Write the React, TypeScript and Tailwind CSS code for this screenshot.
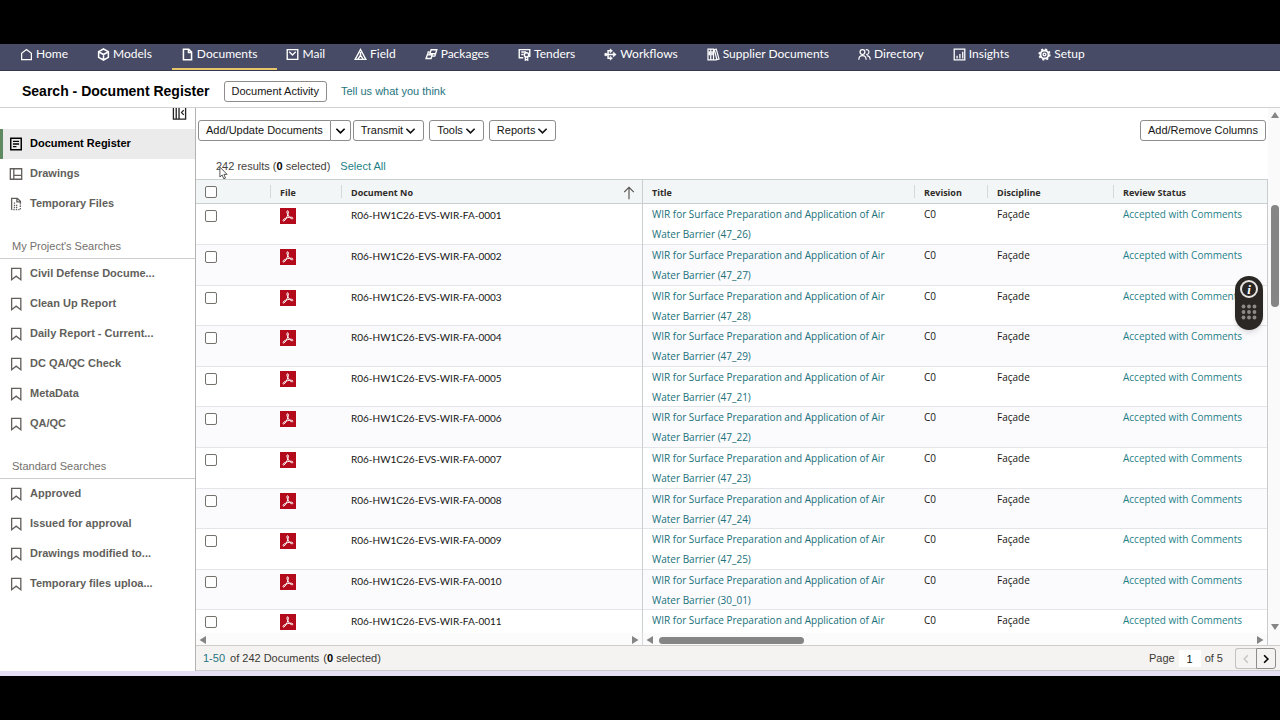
import type { ReactNode } from "react";

type IconProps = { children: ReactNode; className?: string; width?: number };

function Icon({ children, className = "size-[14px]", width = 1.5 }: IconProps) {
  return (
    <svg
      viewBox="0 0 16 16"
      fill="none"
      stroke="currentColor"
      strokeWidth={width}
      aria-hidden="true"
      className={`shrink-0 ${className}`}
    >
      {children}
    </svg>
  );
}

const navItems: { label: string; icon: ReactNode }[] = [
  { label: "Home", icon: <path d="M2 14.2V6.6L8 1.8l6 4.8v7.6z" /> },
  {
    label: "Models",
    icon: <path d="M8 1.2l6 3.3v7L8 14.8l-6-3.3v-7zM3 5.200L8 8l5-2.800M8 8v6" strokeWidth="1.900" />,
  },
  {
    label: "Documents",
    icon: <path d="M3 1.5h6.5L13 5v9.5H3zM9.2 1.5v4H13" strokeWidth="1.9" />,
  },
  { label: "Mail", icon: <path d="M1.5 2h13v12h-13zM4 4.500l4 4 4-4" strokeWidth="1.700" /> },
  { label: "Field", icon: <path d="M8 1.800L14.600 14H1.400zM8 5v4M5 13.500L8 9l3 4.500" strokeWidth="1.700" /> },
  {
    label: "Packages",
    icon: <path d="M7.500 2.200h7L13 7H6zM5.500 5H4l-.8 3.500M8.500 10h3.500l.7-2M2.800 8.500h6L7.500 13H1.300z" strokeWidth="1.700" />,
  },
  {
    label: "Tenders",
    icon: (
      <>
        <path d="M6.5 12H1.5V2h13v9M4 5h6M4 8h3" strokeWidth="1.700" />
        <circle cx="10.5" cy="8.500" r="2.6" strokeWidth="1.700" />
        <path d="M9 11v4l1.5-1 1.5 1v-4" />
      </>
    ),
  },
  {
    label: "Workflows",
    icon: (
      <>
        <path d="M1 8h12M8 3.5H5v9h3" strokeWidth="1.800" />
        <path d="M11.500 5l3.500 3-3.500 3zM7.500 1l3 2.500-3 2.500zM7.500 10l3 2.500-3 2.500zM1 6.500h2.500v3H1z" fill="currentColor" strokeWidth="0.6" />
      </>
    ),
  },
  {
    label: "Supplier Documents",
    icon: <path d="M1.2 1.500h3.400v13H1.200zM4.600 1.500H8v13H4.600zM9 2l2.400-.6 3.400 12.300-2.600.6zM8 14.500h4M2.900 4v5M6.300 4v5" strokeWidth="1.500" />,
  },
  {
    label: "Directory",
    icon: (
      <>
        <circle cx="5.5" cy="5" r="3" />
        <path d="M1 14.5c0-3 1.8-5 4.5-5s4.5 2 4.5 5M9.5 2.2A3 3 0 1 1 10 8M11 9.5c2.4.4 4 2.200 4 5" />
      </>
    ),
  },
  {
    label: "Insights",
    icon: <path d="M1.500 1.500h13v13h-13zM5 13V9.500M8.500 13V7.500M12 13V4.500" strokeWidth="1.600" />,
  },
  {
    label: "Setup",
    icon: (
      <>
        <circle cx="8" cy="8" r="5" strokeWidth="2.400" />
        <circle cx="8" cy="8" r="6.600" strokeWidth="1.800" strokeDasharray="2.600 2.580" />
        <circle cx="8" cy="8" r="1.800" strokeWidth="1.600" />
      </>
    ),
  },
];

const mainLinks: { label: string; icon: ReactNode }[] = [
  { label: "Document Register", icon: <path d="M2 1.500h12v13H2zM4.500 5h7M4.500 8h7M4.500 11h4" strokeWidth="1.700" /> },
  { label: "Drawings", icon: <path d="M1.500 2h13v12h-13zM5.500 2v12M5.500 9.500h9" /> },
  {
    label: "Temporary Files",
    icon: (
      <>
        <path d="M3 14.500V1.500h6.500L13 5v2M9 1.500V5.500h4" />
        <path d="M13 7v7.500H3" strokeDasharray="1.500 1.300" />
        <path d="M5.500 7h2M5.500 9.500h5M5.500 12h5" strokeDasharray="1.500 1" />
      </>
    ),
  },
];

const projectSearches = [
  "Civil Defense Docume...",
  "Clean Up Report",
  "Daily Report - Current...",
  "DC QA/QC Check",
  "MetaData",
  "QA/QC",
];

const standardSearches = [
  "Approved",
  "Issued for approval",
  "Drawings modified to...",
  "Temporary files uploa...",
];

const baseTitle = "WIR for Surface Preparation and Application of Air";
const titleEndings = ["47_26", "47_27", "47_28", "47_29", "47_21", "47_22", "47_23", "47_24", "47_25", "30_01", ""];

const documents = titleEndings.map((ending, i) => ({
  number: `R06-HW1C26-EVS-WIR-FA-${String(i + 1).padStart(4, "0")}`,
  title: ending ? `${baseTitle} Water Barrier (${ending})` : baseTitle,
  revision: "C0",
  discipline: "Façade",
  status: "Accepted with Comments",
}));

const buttonClass =
  "flex h-[21px] items-center gap-[2px] rounded-[3px] border border-[#8f8d8b] bg-white px-[7px] text-[11px] whitespace-nowrap text-[#161513]";
const checkboxClass =
  "block size-3 appearance-none rounded-[2px] border border-[#75716c] bg-white checked:bg-[#227e9e]";

function Chevron() {
  return (
    <Icon className="size-[11px]" width={2.4}>
      <path d="M2 5.500l6 6 6-6" />
    </Icon>
  );
}

function BookmarkIcon() {
  return (
    <Icon>
      <path d="M3 1.500h10.500v13L8.200 10.500 3 14.500z" />
    </Icon>
  );
}

function PdfIcon() {
  return (
    <svg viewBox="0 0 16 16" role="img" aria-label="PDF" className="block size-4">
      <rect width="16" height="16" fill="#b30b1c" />
      <path
        d="M7.600 6.200C6.600 4.500 6.700 2.700 7.600 2.700s1 1.700.2 4C7 9 5.300 12.600 3.800 13c-1.100.2-1.300-.9.200-1.900 1.900-1.200 5-2 7.300-1.900 1.800.1 2 1.300 1.100 1.600C11.100 11.200 8.600 8.600 7.600 6.200z"
        fill="none"
        stroke="#fff"
        strokeWidth="1"
      />
    </svg>
  );
}

function SearchLink({ label, icon, active = false }: { label: string; icon: ReactNode; active?: boolean }) {
  return (
    <li>
      <a
        href="#"
        aria-current={active ? "page" : undefined}
        className={`flex h-[30px] items-center gap-[7px] border-l-3 pl-[6px] text-[11px] font-bold whitespace-nowrap ${
          active ? "border-[#5f8a5f] bg-[#ebebeb] text-black" : "border-transparent text-[#625f5b]"
        }`}
      >
        {icon}
        <span className="pb-px">{label}</span>
      </a>
    </li>
  );
}

function SearchGroup({ title, items }: { title: string; items: string[] }) {
  return (
    <section>
      <h2 className="flex h-10 items-end border-b border-[#cfcdcb] px-3 pb-1 text-[11px] text-[#73706c]">
        {title}
      </h2>
      <ul>
        {items.map((item) => (
          <SearchLink key={item} label={item} icon={<BookmarkIcon />} />
        ))}
      </ul>
    </section>
  );
}

function ScrollArrow({ d }: { d: string }) {
  return (
    <svg viewBox="0 0 8 8" className="block size-2 shrink-0" fill="#858585" aria-hidden="true">
      <path d={d} />
    </svg>
  );
}

const LEFT = "M7 0v8L.5 4z";
const RIGHT = "M1 0v8l6.500-4z";
const UP = "M0 7h8L4 1z";
const DOWN = "M0 1h8L4 7z";

function Header() {
  return (
    <>
      <nav className="flex h-[27px] shrink-0 overflow-hidden border-b border-[#34374f] bg-[#474b65] pl-[11px] font-['Lato','Open_Sans',sans-serif] text-[12px] text-white">
        {navItems.map((item) => {
          const active = item.label === "Documents";
          return (
            <a
              key={item.label}
              href="#"
              aria-current={active ? "page" : undefined}
              className={`flex items-center gap-[3px] border-b-2 pr-5 pb-1 pl-[9px] whitespace-nowrap ${
                active ? "border-[#e6c567]" : "border-transparent"
              }`}
            >
              <Icon className="size-[13px]">{item.icon}</Icon>
              <span>{item.label}</span>
            </a>
          );
        })}
      </nav>
      <header className="flex h-[37px] shrink-0 items-center border-b border-[#d4d2d0] pt-[5px] pl-[22px]">
        <h1 className="text-[14px] font-bold text-black">Search - Document Register</h1>
        <button type="button" className={`${buttonClass} mx-[14px]`}>
          Document Activity
        </button>
        <a href="#" className="text-[11px] text-[#1f7480]">
          Tell us what you think
        </a>
      </header>
    </>
  );
}

function Sidebar() {
  return (
    <aside className="w-[196px] shrink-0 overflow-hidden border-r border-[#b5b3b1]">
      <div className="flex h-[21px] items-start justify-end overflow-hidden pr-2">
        <button type="button" aria-label="Collapse panel" className="-mt-[3px] text-[#222]">
          <Icon className="size-[15px]">
            <path d="M1.500 1v14h13V1M4.500 1v14M7.500 1v14M12.500 5.500L10.200 8l2.300 2.500" strokeWidth="1.400" />
          </Icon>
        </button>
      </div>
      <ul>
        {mainLinks.map((link, i) => (
          <SearchLink key={link.label} label={link.label} icon={<Icon>{link.icon}</Icon>} active={i === 0} />
        ))}
      </ul>
      <SearchGroup title="My Project's Searches" items={projectSearches} />
      <SearchGroup title="Standard Searches" items={standardSearches} />
    </aside>
  );
}

function Toolbar() {
  return (
    <div className="flex shrink-0 items-center pt-3 pr-[2px] pl-[2px]">
      <button type="button" className={`${buttonClass} rounded-r-none`}>
        Add/Update Documents
      </button>
      <button
        type="button"
        aria-label="More add options"
        className="flex h-[21px] w-5 items-center justify-center rounded-r-[3px] border border-l-0 border-[#8f8d8b] bg-white"
      >
        <Chevron />
      </button>
      <div className="ml-[2px] flex gap-[5px]">
        {["Transmit", "Tools", "Reports"].map((label) => (
          <button key={label} type="button" className={buttonClass}>
            {label}
            <Chevron />
          </button>
        ))}
      </div>
      <button type="button" className={`${buttonClass} ml-auto`}>
        Add/Remove Columns
      </button>
    </div>
  );
}

const headCell = "relative h-[25px] pt-[2px] pl-[9px] text-left align-middle";
const divider = "absolute top-[5px] right-0 h-[13px] w-px bg-[#d5d9d9]";
const bodyCell = "pl-[9px] align-top";

function DocumentTable() {
  return (
    <div className="min-h-0 flex-1 overflow-hidden border-r border-[#c9cccc]">
      <table className="w-full table-fixed border-separate border-spacing-0 font-['Open_Sans',sans-serif] text-[10px] leading-5">
        <colgroup>
          <col className="w-[75px]" />
          <col className="w-[71px]" />
          <col className="w-[301px]" />
          <col className="w-[272px]" />
          <col className="w-[73px]" />
          <col className="w-[126px]" />
          <col />
        </colgroup>
        <thead className="text-[9px] font-semibold text-[#2f2c29]">
          <tr className="bg-[#f3f6f6] *:border-y *:border-[#c9cfcf]">
            <th className="relative h-[25px] pl-[9px] align-middle">
              <input type="checkbox" aria-label="Select all documents" className={checkboxClass} />
              <span className={divider} />
            </th>
            <th className={headCell}>
              File
              <span className={divider} />
            </th>
            <th className={`${headCell} border-r`}>
              <div className="flex items-center justify-between pr-[6px]">
                Document No
                <Icon className="size-[14px] text-[#55524e]" width={1.3}>
                  <path d="M8 15V1.500M2.500 7L8 1.500 13.500 7" />
                </Icon>
              </div>
            </th>
            <th className={headCell}>
              Title
              <span className={divider} />
            </th>
            <th className={headCell}>
              Revision
              <span className={divider} />
            </th>
            <th className={headCell}>
              Discipline
              <span className={divider} />
            </th>
            <th className={headCell}>Review Status</th>
          </tr>
        </thead>
        <tbody className="text-[#161513]">
          {documents.map((doc) => (
            <tr
              key={doc.number}
              className="h-[41px] even:bg-[#fbfbfe] *:shadow-[inset_0_-1px_0_#e4e5e8] [&:nth-child(5n)]:h-10 [&:nth-child(5n+3)]:h-10"
            >
              <td className={`${bodyCell} pt-[6px]`}>
                <input type="checkbox" aria-label={`Select ${doc.number}`} className={checkboxClass} />
              </td>
              <td className={`${bodyCell} pt-1`}>
                <PdfIcon />
              </td>
              <td className={`${bodyCell} border-r border-[#c9cfcf] pt-px font-['Lato','Open_Sans',sans-serif]`}>
                {doc.number}
              </td>
              <td className={`${bodyCell} pr-6`}>
                <a href="#" className="text-[#20707a]">
                  {doc.title}
                </a>
              </td>
              <td className={bodyCell}>{doc.revision}</td>
              <td className={bodyCell}>{doc.discipline}</td>
              <td className={bodyCell}>
                <a href="#" className="whitespace-nowrap text-[#1f7f88]">
                  {doc.status}
                </a>
              </td>
            </tr>
          ))}
        </tbody>
      </table>
    </div>
  );
}

function HorizontalScrollbars() {
  return (
    <div className="flex h-3 shrink-0 border-r border-[#c9cccc] bg-[#fbfbfb]">
      <div className="flex w-[447px] shrink-0 items-center justify-between border-r border-[#d5d9d9] px-[3px] pt-[2px]">
        <ScrollArrow d={LEFT} />
        <ScrollArrow d={RIGHT} />
      </div>
      <div className="flex flex-1 items-center gap-[5px] px-[3px] pt-[2px]">
        <ScrollArrow d={LEFT} />
        <div className="h-[7px] w-[145px] rounded-full bg-[#858585]" />
        <div className="ml-auto">
          <ScrollArrow d={RIGHT} />
        </div>
      </div>
    </div>
  );
}

function Footer() {
  return (
    <footer className="flex h-[26px] shrink-0 items-center border-y border-[#cfcdcb] bg-[#f4f3f1] pt-px pr-1 pl-[7px] text-[11px] text-[#3c3935]">
      <a href="#" className="mr-[5px] text-[#1f7480]">
        1-50
      </a>
      <span>of 242 Documents</span>
      <span className="ml-1">
        (<b className="text-black">0</b> selected)
      </span>
      <label htmlFor="page-number" className="ml-auto">
        Page
      </label>
      <input
        id="page-number"
        type="text"
        defaultValue="1"
        className="mx-1 h-[17px] w-[22px] bg-white text-center text-[#161513]"
      />
      <span>of 5</span>
      <div className="ml-3 flex h-[21px]">
        <button
          type="button"
          disabled
          aria-label="Previous page"
          className="flex w-[21px] items-center justify-center rounded-l-[3px] border border-r-0 border-[#c4c2c0] text-[#c4c2c0]"
        >
          <Icon className="size-[10px]" width={2}>
            <path d="M11 2L5 8l6 6" />
          </Icon>
        </button>
        <button
          type="button"
          aria-label="Next page"
          className="flex w-5 items-center justify-center rounded-r-[3px] border border-[#8f8d8b] text-black"
        >
          <Icon className="size-[10px]" width={2.6}>
            <path d="M5 2l6 6-6 6" />
          </Icon>
        </button>
      </div>
    </footer>
  );
}

function HelpWidget() {
  return (
    <div className="absolute top-[168px] right-[17px] flex h-[54px] w-7 flex-col items-center gap-[6px] rounded-full bg-[#2b2724] pt-1 shadow-md">
      <button
        type="button"
        aria-label="Information"
        className="flex size-[18px] items-center justify-center rounded-full border-2 border-[#e8e6e4] font-['Liberation_Serif',serif] text-[13px] leading-none font-bold text-white italic"
      >
        i
      </button>
      <svg viewBox="0 0 16 16" className="size-4" fill="#8d8a87" aria-hidden="true">
        {[2.5, 8, 13.5].map((y) => [2.5, 8, 13.5].map((x) => <circle key={`${x}-${y}`} cx={x} cy={y} r="1.900" />))}
      </svg>
    </div>
  );
}

export default function App() {
  return (
    <div className="flex h-screen flex-col bg-black py-11 font-['Liberation_Sans',Arial,sans-serif]">
      <div className="flex min-h-0 flex-1 flex-col bg-white">
        <Header />
        <div className="relative flex min-h-0 flex-1">
          <Sidebar />
          <main className="flex min-w-0 flex-1 flex-col">
            <div className="flex min-h-0 flex-1">
              <div className="flex min-w-0 flex-1 flex-col">
                <Toolbar />
                <div className="relative flex h-[38px] shrink-0 items-center gap-[10px] pt-3 pl-5 text-[11px] text-[#45423e]">
                  <p>
                    242 results (<b className="text-black">0</b> selected)
                  </p>
                  <button type="button" className="text-[#1f7f88]">
                    Select All
                  </button>
                  <svg
                    viewBox="0 0 10 15"
                    className="absolute top-[25px] left-[23px] h-[14px] w-[9px]"
                    fill="#fff"
                    stroke="#444"
                    aria-hidden="true"
                  >
                    <path d="M1 1v11l2.500-2.300L5.300 14l1.900-.8L5.500 9H9z" />
                  </svg>
                </div>
                <DocumentTable />
                <HorizontalScrollbars />
              </div>
              <div className="flex w-3 shrink-0 flex-col items-end bg-[#fafafa] pt-[3px] pr-px pb-[14px]">
                <ScrollArrow d={UP} />
                <div className="mt-[86px] h-[102px] w-2 rounded-full bg-[#858585]" />
                <div className="mt-auto">
                  <ScrollArrow d={DOWN} />
                </div>
              </div>
            </div>
            <Footer />
          </main>
          <HelpWidget />
        </div>
        <div className="h-[5px] shrink-0 bg-[#e6def5]" />
      </div>
    </div>
  );
}
